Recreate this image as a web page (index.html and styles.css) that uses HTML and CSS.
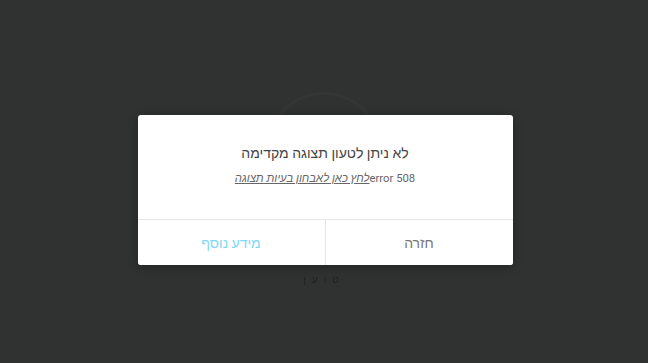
FILE: index.html
```html
<!DOCTYPE html>
<html lang="he" dir="rtl">
<head>
  <meta charset="UTF-8">
  <title>תצוגה מקדימה</title>
  <link rel="stylesheet" href="styles.css">
</head>
<body>
  <div class="loader">
    <div class="spinner"></div>
    <div class="loader-text">טוען</div>
  </div>

  <div class="overlay">
    <div class="dialog">
      <div class="dialog-body">
        <h2 class="dialog-title">לא ניתן לטעון תצוגה מקדימה</h2>
        <p class="dialog-msg"><bdi dir="ltr">error 508</bdi><a href="#">לחץ כאן לאבחון בעיות תצוגה</a></p>
      </div>
      <div class="dialog-actions">
        <button class="btn btn-back">חזרה</button>
        <button class="btn btn-more">מידע נוסף</button>
      </div>
    </div>
  </div>
</body>
</html>
```

FILE: styles.css
```css
html, body {
  margin: 0;
  padding: 0;
  height: 100%;
}

body {
  background: #303231;
  font-family: Roboto, 'Liberation Sans', Arial, sans-serif;
  overflow: hidden;
}

.loader {
  display: flex;
  flex-direction: column;
  align-items: center;
  padding-top: 92px;
}

.spinner {
  width: 110px;
  height: 110px;
  border-radius: 50%;
  border: 3px solid #343635;
  border-bottom-color: transparent;
}

.loader-text {
  margin-top: 66px;
  font-size: 10px;
  letter-spacing: 6px;
  color: #1e201f;
}

.overlay {
  position: absolute;
  inset: 0;
  display: flex;
  justify-content: center;
  align-items: flex-start;
  padding-top: 115px;
  padding-left: 2px;
}

.dialog {
  width: 375px;
  background: #fff;
  border-radius: 3px;
  box-shadow: 0 2px 10px rgba(0, 0, 0, 0.3);
  overflow: hidden;
}

.dialog-body {
  height: 105px;
  padding-top: 29px;
  box-sizing: border-box;
  text-align: center;
  border-bottom: 1px solid #e6e6e6;
}

.dialog-title {
  margin: 0;
  font-size: 14px;
  font-weight: normal;
  line-height: 18px;
  color: #444;
}

.dialog-msg {
  margin: 9px 0 0;
  font-size: 11.3px;
  line-height: 16px;
  color: #666;
}

.dialog-msg a {
  color: #666;
  font-style: italic;
  text-decoration: underline;
}

.dialog-actions {
  display: flex;
  height: 45px;
}

.btn {
  flex: 1;
  border: none;
  background: #fff;
  font-family: inherit;
  font-size: 14px;
  cursor: pointer;
  padding: 0;
}

.btn-back {
  color: #777;
  border-left: 1px solid #e6e6e6;
}

.btn-more {
  color: #7fd8f6;
}
```
